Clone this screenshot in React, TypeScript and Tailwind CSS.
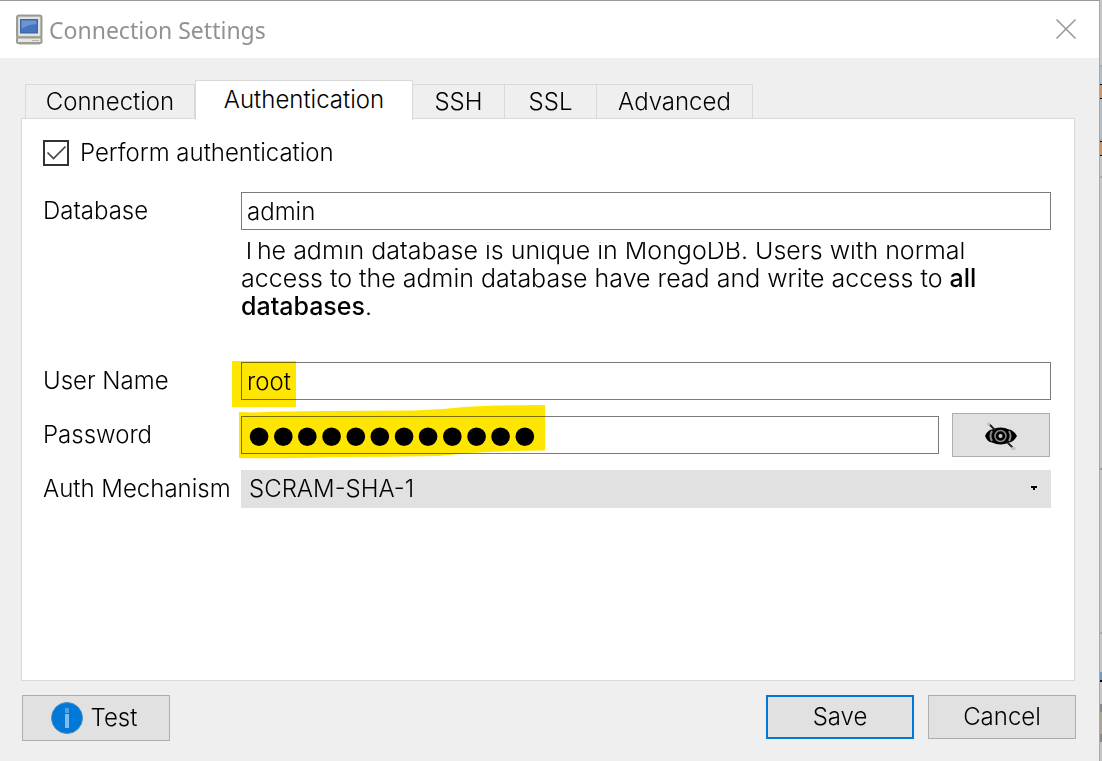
import { useState } from "react";

const FIELD = "h-[38px] w-full min-w-0 border border-[#7a7a7a] bg-white px-[5px] outline-none";
const BUTTON = "flex w-[148px] items-center justify-center bg-[#e1e1e1]";

function ComputerIcon() {
  return (
    <svg width="28" height="32" viewBox="0 0 28 32" aria-hidden="true">
      <rect x="2" y="2.500" width="24.500" height="22" rx="2" fill="#c9cbc4" stroke="#9b9d94" strokeWidth="2" />
      <rect x="3.500" y="4" width="21.500" height="19" rx="1" fill="#e1e3df" />
      <rect x="5" y="6" width="18" height="14.500" fill="#3c68b2" />
      <path d="M6.500 7.500h15v4q-9 0-15 5z" fill="#6d94cf" />
      <path d="M6.500 16.500q6-5 15-5v7.500h-15z" fill="#4674c0" />
      <rect x="2" y="24.500" width="24.500" height="5.500" rx="1" fill="#e6e7e3" stroke="#9b9d94" strokeWidth="2" />
      <path d="M17 27.500h7" stroke="#b3b5ae" strokeWidth="1" />
      <path d="M4 31.500h21" stroke="#cfd0cc" strokeWidth="1" />
    </svg>
  );
}

function HiddenEyeIcon() {
  return (
    <svg width="34" height="30" viewBox="0 0 34 30" aria-hidden="true">
      <path d="M1 16q2.500-6 7-6.500 4-2 8.500-2t8.500 2q4.500.5 8 6.500-3.500 6-8 6.500-4 2-8.500 2t-8.500-2q-4.500-.5-7-6.500z" fill="#000" />
      <path d="M8 11q-3 5 0 10M25 11q3 5 0 10" fill="none" stroke="#8a8a8a" strokeWidth="2" />
      <circle cx="16.500" cy="16" r="5.500" fill="none" stroke="#8a8a8a" strokeWidth="1.500" />
      <circle cx="16.500" cy="16" r="2" fill="#ccc" />
      <path d="M5 4l6 6M23 22l6 6" stroke="#222" strokeWidth="1.800" />
      <path d="M3 2.500h3v3h-3zM27.500 27h4v3h-4z" fill="#c4c4c4" />
    </svg>
  );
}

const TABS = [
  { name: "Connection", width: "w-[170px]" },
  { name: "Authentication", width: "w-[218px]" },
  { name: "SSH", width: "w-[92px]" },
  { name: "SSL", width: "w-[92px]" },
  { name: "Advanced", width: "w-[156px]" },
];

function Tabs() {
  return (
    <div role="tablist" className="flex items-end pl-1">
      {TABS.map(({ name, width }) =>
        name === "Authentication" ? (
          <button
            key={name}
            role="tab"
            aria-selected="true"
            className={`${width} relative z-10 -mb-[2px] h-10 border-x border-t border-[#d9d9d9] bg-white pb-0.5`}
          >
            {name}
          </button>
        ) : (
          <button
            key={name}
            role="tab"
            aria-selected="false"
            className={`${width} h-[34px] border-t border-r border-[#d9d9d9] first:border-l`}
          >
            {name}
          </button>
        ),
      )}
    </div>
  );
}

export default function App() {
  const [user, setUser] = useState("root");
  const [database, setDatabase] = useState("admin");
  const [password, setPassword] = useState("abcdefghijkl");
  const [enabled, setEnabled] = useState(true);

  return (
    <div className="flex min-h-screen bg-[#efefef] font-['Inter',sans-serif] text-[24px] leading-7 font-light text-black">
      <main className="flex min-w-0 flex-1 flex-col">
        <header className="flex h-[58px] items-center border-t border-[#999] bg-white pr-[22px] pb-0.5 pl-[15px]">
          <ComputerIcon />
          <h1 className="pt-0.5 pl-[6px] font-['Noto_Sans',sans-serif] text-[23px] font-normal text-[#929292]">Connection Settings</h1>
          <button aria-label="Close" className="ml-auto">
            <svg width="22" height="22" viewBox="0 0 22 22">
              <path d="M1.500 1.500l19 19M20.500 1.500l-19 19" stroke="#999" strokeWidth="1.600" />
            </svg>
          </button>
        </header>

        <div className="flex flex-1 flex-col pt-[22px] pr-6 pb-5 pl-[21px]">
          <Tabs />
          <section className="flex-1 border border-[#d9d9d9] bg-white pt-5 pr-[23px] pb-5 pl-[21px]">
            <label className="flex h-7 items-center gap-[11px]">
              <span className="relative flex">
                <input
                  type="checkbox"
                  checked={enabled}
                  onChange={(e) => setEnabled(e.target.checked)}
                  className="peer size-[26px] appearance-none border-2 border-[#333] bg-white"
                />
                <svg
                  width="26"
                  height="26"
                  viewBox="0 0 26 26"
                  className="pointer-events-none absolute inset-0 hidden peer-checked:block"
                >
                  <path d="M4.500 12.500l6 6L22.500 6.500" fill="none" stroke="#444" strokeWidth="1.700" />
                </svg>
              </span>
              Perform authentication
            </label>

            <div className="mt-[25px] grid grid-cols-[198px_1fr] items-center">
              <label htmlFor="database">Database</label>
              <input id="database" value={database} onChange={(e) => setDatabase(e.target.value)} className={FIELD} />
              <div className="col-start-2 mt-3 overflow-hidden">
                <p className="-mt-[6px] text-[25px] leading-7 whitespace-nowrap">
                  The admin database is unique in MongoDB. Users with normal
                  <br />
                  access to the admin database have read and write access to <b className="font-medium">all</b>
                  <br />
                  <b className="font-medium">databases</b>.
                </p>
              </div>

              <label htmlFor="user" className="mt-[42px]">User Name</label>
              <div className="relative mt-[42px]">
                <input id="user" value={user} onChange={(e) => setUser(e.target.value)} className={FIELD} />
                <svg
                  width="64"
                  height="46"
                  aria-hidden="true"
                  className="pointer-events-none absolute -top-px -left-[9px] mix-blend-multiply"
                >
                  <path d="M0 0h64v46H0z" fill="#ffe600" />
                </svg>
              </div>

              <label htmlFor="password" className="mt-[13px]">Password</label>
              <div className="mt-[13px] flex items-center gap-[13px]">
                <div className="relative min-w-0 flex-1">
                  <input
                    id="password"
                    type="password"
                    value={password}
                    onChange={(e) => setPassword(e.target.value)}
                    className={`${FIELD} block font-['Liberation_Sans',sans-serif] text-[69px] leading-9 font-normal`}
                  />
                  <svg
                    width="307"
                    height="56"
                    viewBox="0 0 307 56"
                    aria-hidden="true"
                    className="pointer-events-none absolute -top-[12px] -left-[2px] mix-blend-multiply"
                  >
                    <path d="M0 8L15 8.500Q50 7 90 7L175 6.500Q200 6 225 3Q250 1 306 1V46.500Q240 47 200 52Q150 53 100 53Q50 55 0 54z" fill="#ffe600" />
                  </svg>
                </div>
                <button
                  aria-label="Show password"
                  className="mr-px flex h-11 w-[98px] items-center justify-center border border-[#adadad] bg-[#e1e1e1]"
                >
                  <HiddenEyeIcon />
                </button>
              </div>

              <label htmlFor="mechanism" className="mt-[13px] whitespace-nowrap">Auth Mechanism</label>
              <div className="relative mt-[13px]">
                <select id="mechanism" className="block h-[38px] w-full appearance-none bg-[#e1e1e1] px-2">
                  <option>SCRAM-SHA-1</option>
                </select>
                <svg width="6" height="4" aria-hidden="true" className="pointer-events-none absolute top-4 right-[14px]">
                  <path d="M0 0h6v2H4v2H2V2H0z" fill="#000" />
                </svg>
              </div>
            </div>
          </section>

          <footer className="-mr-px mt-[14px] flex items-start gap-[14px] pl-px">
            <button className={`${BUTTON} mr-auto h-[46px] gap-2 border border-[#adadad] pr-1`}>
              <svg width="32" height="32" viewBox="0 0 32 32" aria-hidden="true">
                <circle cx="16" cy="16" r="15.500" fill="#0078d7" stroke="#4c8fc0" strokeWidth="1" />
                <path d="M14 6h4v5h-4z" fill="#4ca0e3" />
                <path d="M14 12h4v14h-4z" fill="#80bceb" />
              </svg>
              Test
            </button>
            <button className={`${BUTTON} h-11 border-2 border-[#0078d7]`}>Save</button>
            <button className={`${BUTTON} h-11 border border-[#adadad]`}>Cancel</button>
          </footer>
        </div>
      </main>

      <aside aria-hidden="true" className="flex w-[3px] flex-col border-l border-[#a8a8a8] bg-[#c6c6c6]">
        <div className="h-[65px]" />
        <div className="h-[19px] border-t-2 border-[#aaa] bg-[#b4bcc4]" />
        <div className="h-[15px] border-y border-black bg-[#c99668]" />
        <div className="h-[42px] border-b-2 border-[#aaa] bg-[#b4bcc4]" />
        <div className="h-[15px] border-y border-black bg-[#c99668]" />
        <div className="h-[22px] border-b-2 border-[#aaa]" />
        <div className="h-[292px] border-b-2 border-[#999]" />
        <div className="h-[164px] border-b-2 border-[#aaa]" />
        <div className="h-[38px]" />
        <div className="h-[10px] border-b-2 border-black bg-[#7898ba]" />
        <div className="h-[22px]" />
        <div className="h-[38px] border-y-8 border-[#888] bg-[#aaa397]" />
      </aside>
    </div>
  );
}
